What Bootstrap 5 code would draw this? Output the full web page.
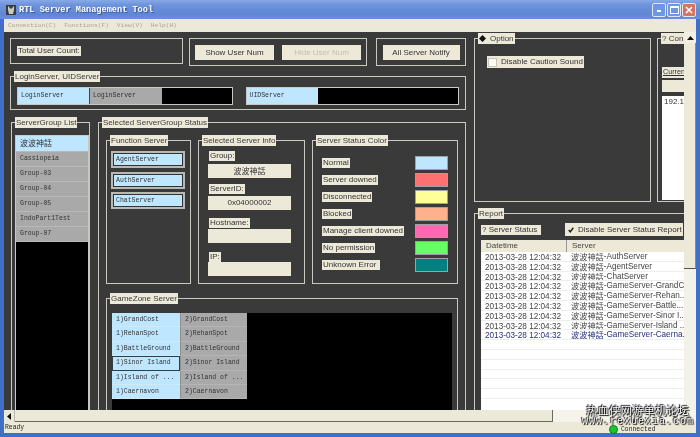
<!DOCTYPE html>
<html lang="en">
<head>
    <meta charset="UTF-8">
    <meta name="viewport" content="width=device-width, initial-scale=1.0">
    <title>RTL Server Management Tool</title>
    <link rel="stylesheet" href="https://cdn.jsdelivr.net/npm/bootstrap@5.3.2/dist/css/bootstrap.min.css">
    <style>
        html, body { margin: 0; height: 100%; overflow: hidden; background: #3a3a3a; }
        body { font-family: "Liberation Sans", Arial, sans-serif; font-size: 8px; color: #333; }
        .app-win { width: 700px; height: 437px; position: relative; overflow: hidden; background: #3f6fc9; padding: 0 4px 4px; filter: blur(.3px); }
        .title-bar { height: 19px; margin: 0 -4px; padding: 0 4px 0 5px; background: linear-gradient(to bottom, #86a9e6 0, #6f94dc 25%, #5f86d6 75%, #6c90da 100%); }
        .title-txt { font: bold 8.6px "Liberation Mono", monospace; color: #fff; text-shadow: 1px 1px 1px #33508f; margin-left: 2px; }
        .cap-btn { width: 14px; height: 14px; border: 1px solid #dfe8f8; border-radius: 2px; background: #6d96e4; margin-left: 1px; }
        .cap-btn.cls { background: #d8745e; }
        .menu-bar { height: 13px; background: #ece9d8; font: 6.2px "Liberation Mono", monospace; color: #a8a48f; padding-left: 4px; gap: 8px; }
        .work-area { height: 378px; background: #3a3a3a; overflow: hidden; }
        .left-side { width: 462px; padding: 6px 0 0 6px; flex: none; }
        .right-side { width: 218px; padding: 6px 0 0 8px; flex: none; overflow: hidden; }
        .v-scroll { width: 12px; flex: none; background: #f4f2e8; }
        .v-thumb { height: 226px; background: #ece9d8; border-bottom: 1px solid #55534a; border-right: 1px solid #8d8b7e; }
        .v-arrow { height: 11px; background: #f1efe4; color: #111; }
        .hbar { height: 12px; background: #f6f4ea; }
        .h-thumb { width: 538px; background: #ece9d8; border-right: 1px solid #6b6a60; border-bottom: 1px solid #6b6a60; }
        .h-arrow { width: 11px; background: #ece9d8; border-right: 1px solid #bbb8a8; flex: none; }
        .status-line { height: 11px; background: #ece9d8; font: 6.4px "Liberation Mono", monospace; color: #222; padding-left: 1px; }
        .gbox { border: 1px solid #c9c9c2; position: relative; flex: none; }
        .gtitle { position: absolute; left: 3px; top: -6px; background: #ece9d8; color: #3a3a3a; height: 11px; line-height: 11px; padding: 0 1px; white-space: nowrap; }
        .fld-lbl { background: #ece9d8; color: #333; height: 10px; line-height: 10px; padding: 0 1px; white-space: nowrap; display: block; width: fit-content; }
        .btn.win-btn { --bs-btn-padding-y: 0; --bs-btn-padding-x: 0; --bs-btn-font-size: 8px; --bs-btn-border-radius: 0; --bs-btn-border-width: 0; --bs-btn-line-height: 15px; height: 15px; width: 79px; background: #ece9d8; color: #333; }
        .btn.win-btn:disabled { opacity: 1; color: #c2bfae; background: #ece9d8; }
        .btn.notify-btn { width: 77px; }
        .box-count { width: 173px; height: 26px; padding-left: 6px; }
        .box-toggle { width: 178px; height: 28px; margin-left: 6px; }
        .box-notify { width: 90px; height: 28px; margin-left: 9px; }
        .box-login { width: 456px; height: 34px; margin-top: 10px; padding: 10px 6px 0; }
        .lower-row { margin-top: 12px; margin-left: 1px; gap: 8px; }
        .box-groups { width: 79px; height: 300px; }
        .box-status { width: 368px; height: 300px; padding: 17px 0 0 7px; }
        .status-cols { gap: 7px; }
        .box-func { width: 85px; height: 144px; padding: 10px 0 0 4px; gap: 3.5px; }
        .box-info { width: 107px; height: 144px; padding-top: 10px; }
        .box-color { width: 146px; height: 144px; padding-top: 13px; }
        .box-zone { width: 352px; height: 140px; margin-top: 14px; padding: 14px 0 0 5px; }
        .box-option { width: 177px; height: 164px; padding: 17px 0 0 12px; }
        .box-conn { width: 60px; height: 164px; margin-left: 6px; padding-top: 28px; }
        .box-report { width: 260px; height: 210px; margin-top: 11px; }
        .right-top { width: 260px; }
        .serv-strip { height: 18px; border: 1px solid #c9c9c2; background: #000; font: 6.5px/16px "Liberation Mono", monospace; color: #333; width: 216px; }
        .uid-strip { width: 214px; margin-left: 13px; }
        .serv-cell { height: 100%; padding-left: 3px; flex: none; white-space: nowrap; width: 71px; }
        .serv-cell.c-grey { width: 73px; border-left: 1px solid #444; }
        .c-cyan { background: #bfe6ff; }
        .c-grey { background: #a9a9a9; }
        .grp-list { --bs-list-group-border-radius: 0; margin: 12px 0 0 3px; width: 74px; border: 1px solid #c9c9c2; background: #000; height: 290px; font: 6.5px/15px "Liberation Mono", monospace; }
        .grp-list .list-group-item { padding: 0 0 0 4px; height: 15px; line-height: 14px; background: #a9a9a9; color: #333; border: 0; border-bottom: 1px solid #b8b8b8; border-radius: 0; margin: 0; }
        .grp-list .list-group-item.active { background: #bfe6ff; height: 16px; font-family: "Noto Sans CJK TC", sans-serif; font-size: 8px; }
        .fn-item { width: 74px; height: 17px; border: 2px solid #b9b9b3; outline: 1px solid #333; outline-offset: -3px; background: #bfe6ff; font: 6.5px/13px "Liberation Mono", monospace; padding-left: 3px; color: #333; }
        .info-lbl { margin-left: 10px; }
        .info-val { width: 83px; height: 14px; background: #ece9d8; text-align: center; line-height: 14px; margin-left: 9px; color: #333; }
        .m-group { margin-top: 3px; }
        .m-sid { margin-top: 6px; }
        .m-sidv { margin-top: 2px; }
        .m-host { margin-top: 8px; }
        .m-hostv { margin-top: 1px; }
        .m-ip { margin-top: 9px; }
        .stat-row { height: 17px; padding-left: 9px; padding-right: 9px; }
        .swatch { width: 33px; height: 14px; border: 1px solid #9fa2a2; }
        .zone-grid { display: grid; width: 340px; height: 120px; background: #000; grid-template-columns: 68px 67px; grid-auto-rows: 14.4px; font: 6.5px/14px "Liberation Mono", monospace; color: #333; }
        .zone-cell { padding-left: 4px; white-space: nowrap; overflow: hidden; border-bottom: 1px solid #cfe9f7; }
        .zone-cell.c-grey { border-bottom-color: #b5b5b5; border-left: 1px solid #8f8f8f; }
        .zone-cell.picked { outline: 1px solid #2f3f48; outline-offset: -1px; }
        .chk-box { width: 9px; height: 9px; background: #fbfbf7; border: 1px solid #c8c5b6; flex: none; }
        .chk-lbl { width: 97px; height: 12px; }
        .conn-cap { margin-left: 4px; height: 11px; font-size: 7.2px; text-decoration: underline; }
        .conn-head { width: 22px; height: 12px; background: #ece9d8; margin: 2px 0 0 4px; }
        .conn-list { margin: 4px 0 0 4px; height: 104px; width: 22px; padding-left: 2px; background: #fff; }
        .rep-top { padding: 9px 0 0 6px; }
        .rep-status { width: 60px; margin-top: 2px; }
        .rep-check { width: 118px; height: 13px; margin-left: 24px; padding-left: 3px; }
        .rep-check svg { flex: none; }
        .rpt-wrap { margin: 4px 0 0 6px; height: 170px; width: 203px; background: #fff; }
        .rpt-head { height: 12px; background: #ece9d8; color: #444; line-height: 12px; }
        .rpt-head-a { width: 86px; padding-left: 5px; border-right: 1px solid #999; }
        .rpt-head-b { width: 117px; padding-left: 5px; }
        .rpt-line { height: 9.8px; line-height: 9px; font-size: 8.2px; color: #444; border-bottom: 1px solid #edf0e8; white-space: nowrap; overflow: hidden; }
        .rpt-line.last-row { color: #25307f; }
        .rpt-a { width: 86px; padding: 1px 0 0 4px; flex: none; }
        .rpt-b { width: 117px; padding-left: 4px; flex: none; overflow: hidden; }
        .cjk-txt { font-family: "Noto Sans CJK TC", sans-serif; }
        .rpt-b .cjk-txt { display: inline-block; height: 9px; line-height: 9px; vertical-align: top; overflow: hidden; }
        .wm-mark { position: absolute; left: 579px; top: 403px; width: 118px; text-align: center; color: #fff; text-shadow: 0 0 1px #000, 1px 1px 1px #000, -1px -1px 1px #000; }
        .wm-cn { font: 11px/14px "Noto Sans CJK SC", sans-serif; letter-spacing: .5px; }
        .wm-url { font: 10px/10px "Liberation Mono", monospace; letter-spacing: 1px; }
        .conn-mark { position: absolute; left: 609px; top: 425px; gap: 3px; font: 6.4px/9px "Liberation Mono", monospace; color: #222; }
        .led-dot { width: 9px; height: 9px; border-radius: 50%; background: #19c52c; border: 1px solid #0a7f1a; }
        .sw-normal { background: #bfe6ff; }
        .sw-down { background: #ff7070; }
        .sw-disc { background: #ffff99; }
        .sw-block { background: #ffb08c; }
        .sw-client { background: #ff69b4; }
        .sw-perm { background: #66ff66; }
        .sw-unk { background: #008080; }
    </style>
</head>
<body>
<div class="app-win d-flex flex-column">
    <div class="title-bar d-flex align-items-center">
        <svg width="12" height="12" viewBox="0 0 12 12"><rect x="1" y="1" width="10" height="10" fill="#3b3b3b"/><path d="M3 2l3 3 3-3v4l-1 4H4L3 6z" fill="#c9c9c9"/></svg>
        <span class="title-txt flex-grow-1">RTL Server Management Tool</span>
        <div class="cap-btn d-flex justify-content-start align-items-end p-1"><svg width="5" height="2" class="d-block"><rect width="5" height="2" fill="#fff"/></svg></div>
        <div class="cap-btn d-flex justify-content-center align-items-center"><svg width="9" height="8"><rect x=".5" y=".5" width="8" height="7" fill="none" stroke="#fff"/><rect width="9" height="2" fill="#fff"/></svg></div>
        <div class="cap-btn cls d-flex justify-content-center align-items-center"><svg width="8" height="8"><path d="M1 1l6 6M7 1L1 7" stroke="#fff" stroke-width="1.6"/></svg></div>
    </div>
    <div class="menu-bar d-flex align-items-center">
        <span>Connection(C)</span><span>Functions(F)</span><span>View(V)</span><span>Help(H)</span>
    </div>
    <div class="work-area d-flex">
        <div class="left-side">
            <div class="d-flex">
                <div class="gbox box-count d-flex align-items-center"><span class="fld-lbl">Total User Count:</span></div>
                <div class="gbox box-toggle d-flex align-items-center justify-content-center gap-2">
                    <button class="btn win-btn">Show User Num</button>
                    <button class="btn win-btn" disabled>Hide User Num</button>
                </div>
                <div class="gbox box-notify d-flex align-items-center justify-content-center">
                    <button class="btn win-btn notify-btn">All Server Notify</button>
                </div>
            </div>
            <div class="gbox box-login d-flex">
                <span class="gtitle">LoginServer, UIDServer</span>
                <div class="serv-strip d-flex">
                    <div class="serv-cell c-cyan">LoginServer</div>
                    <div class="serv-cell c-grey">LoginServer</div>
                </div>
                <div class="serv-strip uid-strip d-flex">
                    <div class="serv-cell c-cyan">UIDServer</div>
                </div>
            </div>
            <div class="lower-row d-flex">
                <div class="gbox box-groups">
                    <span class="gtitle">ServerGroup List</span>
                    <div class="grp-list list-group">
                        <div class="list-group-item active">波波神話</div>
                        <div class="list-group-item">Cassiopeia</div>
                        <div class="list-group-item">Group-03</div>
                        <div class="list-group-item">Group-04</div>
                        <div class="list-group-item">Group-05</div>
                        <div class="list-group-item">IndoPart1Test</div>
                        <div class="list-group-item">Group-07</div>
                    </div>
                </div>
                <div class="gbox box-status">
                    <span class="gtitle">Selected ServerGroup Status</span>
                    <div class="status-cols d-flex">
                        <div class="gbox box-func d-flex flex-column">
                            <span class="gtitle">Function Server</span>
                            <div class="fn-item">AgentServer</div>
                            <div class="fn-item">AuthServer</div>
                            <div class="fn-item">ChatServer</div>
                        </div>
                        <div class="gbox box-info">
                            <span class="gtitle">Selected Server Info</span>
                            <span class="fld-lbl info-lbl">Group:</span>
                            <div class="info-val cjk-txt m-group">波波神話</div>
                            <span class="fld-lbl info-lbl m-sid">ServerID:</span>
                            <div class="info-val m-sidv">0x04000002</div>
                            <span class="fld-lbl info-lbl m-host">Hostname:</span>
                            <div class="info-val m-hostv"></div>
                            <span class="fld-lbl info-lbl m-ip">IP:</span>
                            <div class="info-val"></div>
                        </div>
                        <div class="gbox box-color">
                            <span class="gtitle">Server Status Color</span>
                            <div class="stat-row d-flex justify-content-between align-items-center"><span class="fld-lbl">Normal</span><div class="swatch sw-normal"></div></div>
                            <div class="stat-row d-flex justify-content-between align-items-center"><span class="fld-lbl">Server downed</span><div class="swatch sw-down"></div></div>
                            <div class="stat-row d-flex justify-content-between align-items-center"><span class="fld-lbl">Disconnected</span><div class="swatch sw-disc"></div></div>
                            <div class="stat-row d-flex justify-content-between align-items-center"><span class="fld-lbl">Blocked</span><div class="swatch sw-block"></div></div>
                            <div class="stat-row d-flex justify-content-between align-items-center"><span class="fld-lbl">Manage client downed</span><div class="swatch sw-client"></div></div>
                            <div class="stat-row d-flex justify-content-between align-items-center"><span class="fld-lbl">No permission</span><div class="swatch sw-perm"></div></div>
                            <div class="stat-row d-flex justify-content-between align-items-center"><span class="fld-lbl">Unknown Error&nbsp;</span><div class="swatch sw-unk"></div></div>
                        </div>
                    </div>
                    <div class="gbox box-zone">
                        <span class="gtitle">GameZone Server</span>
                        <div class="zone-grid">
                            <div class="zone-cell c-cyan">1)GrandCost</div><div class="zone-cell c-grey">2)GrandCost</div>
                            <div class="zone-cell c-cyan">1)RehanSpot</div><div class="zone-cell c-grey">2)RehanSpot</div>
                            <div class="zone-cell c-cyan">1)BattleGround</div><div class="zone-cell c-grey">2)BattleGround</div>
                            <div class="zone-cell c-cyan picked">1)Sinor Island</div><div class="zone-cell c-grey">2)Sinor Island</div>
                            <div class="zone-cell c-cyan">1)Island of ...</div><div class="zone-cell c-grey">2)Island of ...</div>
                            <div class="zone-cell c-cyan">1)Caernavon</div><div class="zone-cell c-grey">2)Caernavon</div>
                        </div>
                    </div>
                </div>
            </div>
        </div>
        <div class="right-side">
            <div class="right-top d-flex">
                <div class="gbox box-option">
                    <span class="gtitle"><svg width="7" height="7" viewBox="0 0 8 8" class="me-1"><path d="M4 0l4 4-4 4-4-4z" fill="#111"/></svg>Option</span>
                    <div class="fld-lbl chk-lbl d-flex align-items-center gap-1"><span class="chk-box"></span>Disable Caution Sound</div>
                </div>
                <div class="gbox box-conn">
                    <span class="gtitle">? Con</span>
                    <div class="fld-lbl conn-cap">Curren</div>
                    <div class="conn-head"></div>
                    <div class="conn-list">192.1</div>
                </div>
            </div>
            <div class="gbox box-report">
                <span class="gtitle">Report</span>
                <div class="rep-top d-flex">
                    <span class="fld-lbl rep-status">? Server Status</span>
                    <div class="fld-lbl rep-check d-flex align-items-center gap-1">
                        <svg width="6" height="6" viewBox="0 0 8 8"><path d="M1 4l2 2.5L7 1" fill="none" stroke="#111" stroke-width="1.8"/></svg>Disable Server Status Report
                    </div>
                </div>
                <div class="rpt-wrap">
                    <div class="rpt-head d-flex"><div class="rpt-head-a">Datetime</div><div class="rpt-head-b">Server</div></div>
                    <div class="rpt-line d-flex"><div class="rpt-a">2013-03-28 12:04:32</div><div class="rpt-b"><span class="cjk-txt">波波神話</span>-AuthServer</div></div>
                    <div class="rpt-line d-flex"><div class="rpt-a">2013-03-28 12:04:32</div><div class="rpt-b"><span class="cjk-txt">波波神話</span>-AgentServer</div></div>
                    <div class="rpt-line d-flex"><div class="rpt-a">2013-03-28 12:04:32</div><div class="rpt-b"><span class="cjk-txt">波波神話</span>-ChatServer</div></div>
                    <div class="rpt-line d-flex"><div class="rpt-a">2013-03-28 12:04:32</div><div class="rpt-b"><span class="cjk-txt">波波神話</span>-GameServer-GrandC...</div></div>
                    <div class="rpt-line d-flex"><div class="rpt-a">2013-03-28 12:04:32</div><div class="rpt-b"><span class="cjk-txt">波波神話</span>-GameServer-Rehan...</div></div>
                    <div class="rpt-line d-flex"><div class="rpt-a">2013-03-28 12:04:32</div><div class="rpt-b"><span class="cjk-txt">波波神話</span>-GameServer-Battle...</div></div>
                    <div class="rpt-line d-flex"><div class="rpt-a">2013-03-28 12:04:32</div><div class="rpt-b"><span class="cjk-txt">波波神話</span>-GameServer-Sinor I...</div></div>
                    <div class="rpt-line d-flex"><div class="rpt-a">2013-03-28 12:04:32</div><div class="rpt-b"><span class="cjk-txt">波波神話</span>-GameServer-Island ...</div></div>
                    <div class="rpt-line last-row d-flex"><div class="rpt-a">2013-03-28 12:04:32</div><div class="rpt-b"><span class="cjk-txt">波波神話</span>-GameServer-Caerna...</div></div>
                    <div class="rpt-line"></div><div class="rpt-line"></div><div class="rpt-line"></div>
                    <div class="rpt-line"></div><div class="rpt-line"></div><div class="rpt-line"></div>
                </div>
            </div>
        </div>
        <div class="v-scroll d-flex flex-column">
            <div class="v-arrow d-flex justify-content-center align-items-center"><svg width="7" height="4"><path d="M3.5 0L7 4H0z" fill="#111"/></svg></div>
            <div class="v-thumb"></div>
        </div>
    </div>
    <div class="hbar d-flex">
        <div class="h-arrow d-flex justify-content-center align-items-center"><svg width="4" height="7"><path d="M0 3.5L4 0v7z" fill="#111"/></svg></div>
        <div class="h-thumb"></div>
    </div>
    <div class="status-line d-flex align-items-center">Ready</div>
    <div class="wm-mark">
        <div class="wm-cn">热血侠网游单机论坛</div>
        <div class="wm-url">www.rexuexia.com</div>
    </div>
    <div class="conn-mark d-flex align-items-center"><span class="led-dot"></span>Connected</div>
</div>
<script src="https://cdn.jsdelivr.net/npm/bootstrap@5.3.2/dist/js/bootstrap.bundle.min.js"></script>
</body>
</html>
